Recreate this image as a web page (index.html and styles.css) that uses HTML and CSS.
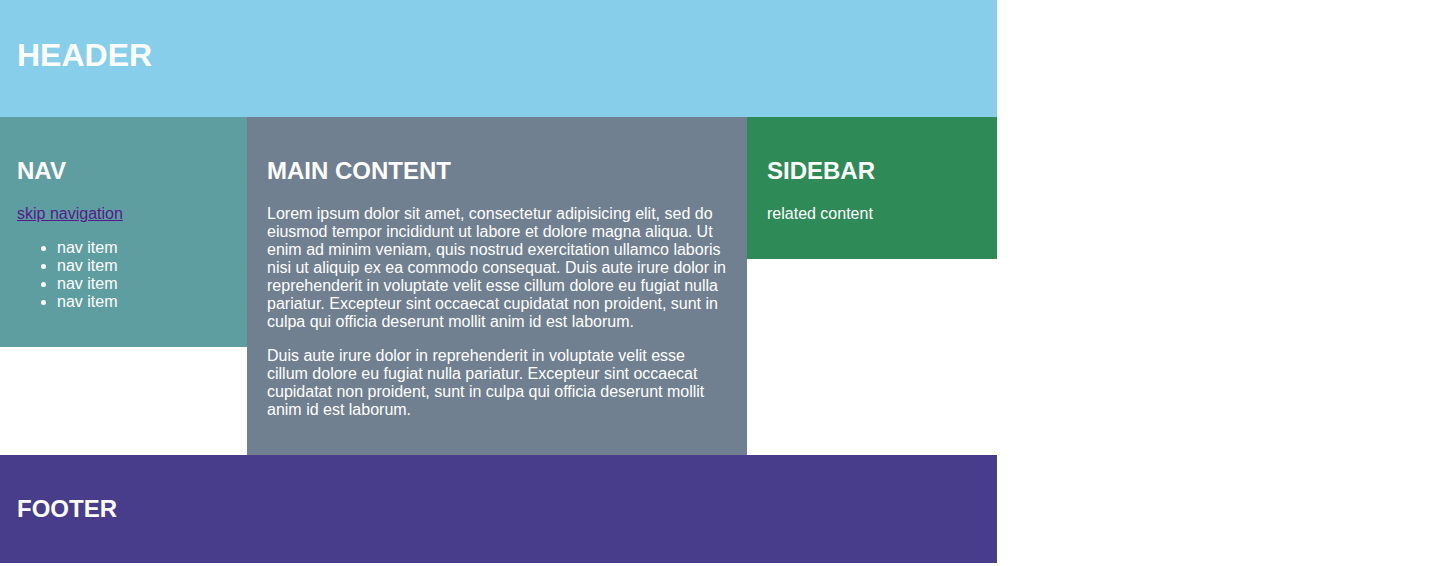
FILE: index.html
```html
<!DOCTYPE html>
<html lang="en">
<head>
<meta charset="utf-8">
<title>Layout</title>
<link rel="stylesheet" href="styles.css">
</head>
<body>
<div class="page">
  <header class="header">
    <h1>HEADER</h1>
  </header>
  <nav class="nav">
    <h2>NAV</h2>
    <p><a class="skip" href="#main">skip navigation</a></p>
    <ul>
      <li>nav item</li>
      <li>nav item</li>
      <li>nav item</li>
      <li>nav item</li>
    </ul>
  </nav>
  <main class="main" id="main">
    <h2>MAIN CONTENT</h2>
    <p>Lorem ipsum dolor sit amet, consectetur adipisicing elit, sed do eiusmod tempor incididunt ut labore et dolore magna aliqua. Ut enim ad minim veniam, quis nostrud exercitation ullamco laboris nisi ut aliquip ex ea commodo consequat. Duis aute irure dolor in reprehenderit in voluptate velit esse cillum dolore eu fugiat nulla pariatur. Excepteur sint occaecat cupidatat non proident, sunt in culpa qui officia deserunt mollit anim id est laborum.</p>
    <p>Duis aute irure dolor in reprehenderit in voluptate velit esse cillum dolore eu fugiat nulla pariatur. Excepteur sint occaecat cupidatat non proident, sunt in culpa qui officia deserunt mollit anim id est laborum.</p>
  </main>
  <aside class="sidebar">
    <h2>SIDEBAR</h2>
    <p>related content</p>
  </aside>
  <footer class="footer">
    <h2>FOOTER</h2>
  </footer>
</div>
</body>
</html>
```
FILE: styles.css
```css
html, body {
  margin: 0;
  padding: 0;
  background: #ffffff;
}

body {
  font-family: "Liberation Sans", Arial, sans-serif;
  font-size: 16px;
  color: #ffffff;
}

.page {
  width: 997px;
  display: grid;
  grid-template-columns: 247px 500px 250px;
  align-items: start;
}

.header {
  grid-column: 1 / -1;
  background: #87ceeb;
  height: 117px;
  box-sizing: border-box;
  padding: 16px 20px 0 17px;
}

.header h1 {
  font-size: 32px;
  font-weight: bold;
  margin: 21px 0;
}

h2 {
  font-size: 24px;
  font-weight: bold;
  margin: 20px 0;
}

p, li {
  line-height: 18px;
}

p {
  margin: 16px 0;
}

ul {
  margin: 16px 0;
  padding-left: 40px;
}

.nav {
  background: #5f9ea0;
  padding: 20px 20px 20px 17px;
}

.main {
  background: #708090;
  padding: 20px;
}

.sidebar {
  background: #2e8b57;
  padding: 20px;
}

.footer {
  grid-column: 1 / -1;
  background: #483d8b;
  padding: 20px 20px 20px 17px;
}

.skip {
  color: #551a8b;
}
```
